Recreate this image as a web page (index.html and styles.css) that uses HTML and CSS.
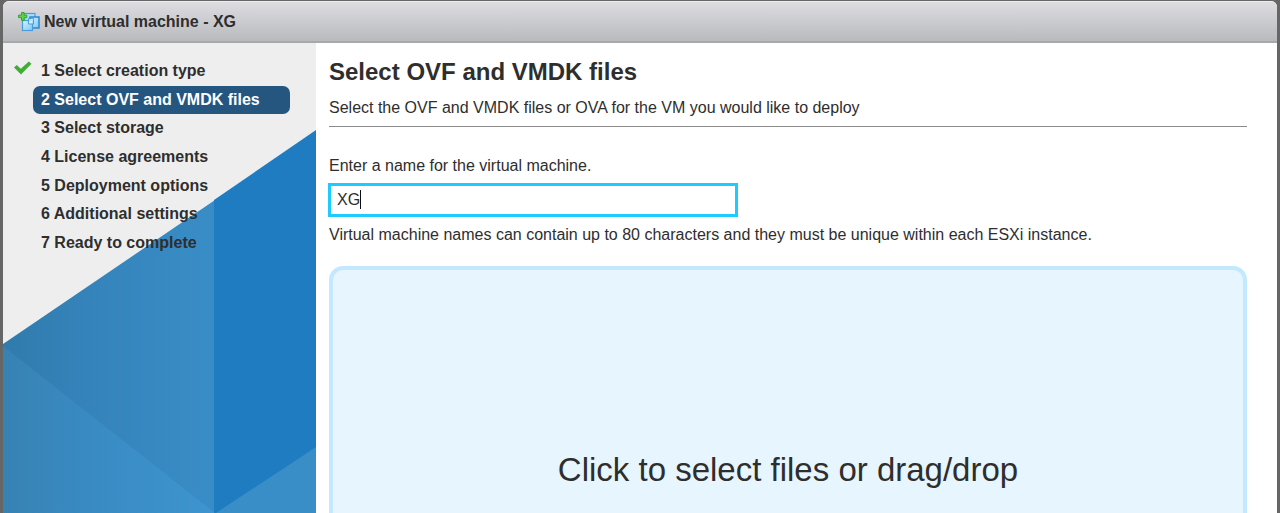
FILE: index.html
```html
<!DOCTYPE html>
<html lang="en">
<head>
  <meta charset="UTF-8" />
  <meta name="viewport" content="width=device-width, initial-scale=1.0"/>
  <title>New virtual machine - XG</title>
  <link rel="stylesheet" href="styles.css">
</head>
<body>
  <div class="dialog">
    <header class="titlebar">
      <svg class="vm-icon" viewBox="0 0 22 20" aria-hidden="true">
        <defs>
          <linearGradient id="pane" x1="0" y1="0" x2="1" y2="1">
            <stop offset="0" stop-color="#d8f3ff"/>
            <stop offset="1" stop-color="#7cc8f5"/>
          </linearGradient>
        </defs>
        <rect x="6" y="1.500" width="11" height="11" fill="#a9def8" stroke="#4a9ddb" stroke-width="1.2"/>
        <rect x="12" y="5" width="9" height="11" fill="url(#pane)" stroke="#2f86d0" stroke-width="1.5"/>
        <rect x="4.500" y="8.500" width="10" height="10" fill="url(#pane)" stroke="#4a9ddb" stroke-width="1.2"/>
        <path d="M10.500 6.500h5v5.500h-5z" fill="#e2f6ff" fill-opacity=".7" stroke="#4a9ddb"/>
        <path d="M3.500 .5h2.600v2.600h2.700v2.600H6.100v2.700H3.500V5.700H.6V3.100h2.900z" fill="#5fd04a" stroke="#34a52c"/>
      </svg>
      <span>New virtual machine - XG</span>
    </header>

    <div class="content">
      <nav class="sidebar">
        <svg class="backdrop" viewBox="0 0 313 470" preserveAspectRatio="none" aria-hidden="true">
          <defs>
            <linearGradient id="upper" x1="0" y1="0" x2="1" y2="0">
              <stop offset="0" stop-color="#307bac"/>
              <stop offset=".4" stop-color="#3583bb"/>
              <stop offset="1" stop-color="#398dc6"/>
            </linearGradient>
            <linearGradient id="lower" x1="0" y1="0" x2="1" y2="0">
              <stop offset="0" stop-color="#3782b3"/>
              <stop offset=".4" stop-color="#398ac3"/>
              <stop offset="1" stop-color="#3e95cf"/>
            </linearGradient>
          </defs>
          <path d="M0 301L212 157V470H0z" fill="url(#upper)"/>
          <path d="M0 303L212 470H0z" fill="url(#lower)"/>
          <path d="M211 157L313 87V470H211z" fill="#1f7cc1"/>
          <path d="M213 470L313 404V470z" fill="#398ec8"/>
        </svg>
        <ol class="steps">
          <li class="done">
            <svg class="check" viewBox="0 0 18 14" aria-hidden="true">
              <path d="M0 6.500L2.800 4L6.800 7.800L14.800 .5L17.500 2.800L7 13.500z" fill="#3fae35"/>
            </svg>
            <a href="#">1 Select creation type</a>
          </li>
          <li class="active"><a href="#" aria-current="step">2 Select OVF and VMDK files</a></li>
          <li><a href="#">3 Select storage</a></li>
          <li><a href="#">4 License agreements</a></li>
          <li><a href="#">5 Deployment options</a></li>
          <li><a href="#">6 Additional settings</a></li>
          <li><a href="#">7 Ready to complete</a></li>
        </ol>
      </nav>

      <main class="page">
        <h1>Select OVF and VMDK files</h1>
        <p class="subtitle">Select the OVF and VMDK files or OVA for the VM you would like to deploy</p>

        <label for="vmName">Enter a name for the virtual machine.</label>
        <div class="field">
          <input type="text" id="vmName" class="name-input" value="XG" />
          <span class="caret"></span>
        </div>
        <p class="hint">Virtual machine names can contain up to 80 characters and they must be unique within each ESXi instance.</p>

        <button type="button" class="dropzone">Click to select files or drag/drop</button>
      </main>
    </div>
  </div>
</body>
</html>
```

FILE: styles.css
```css
* {
  box-sizing: border-box;
}

body {
  margin: 0;
  padding: 1px 3px 0;
  height: 100vh;
  overflow: hidden;
  background-color: #666;
  color: #2e2e2e;
  font-family: "Liberation Sans", Arial, sans-serif;
  font-size: 16px;
  line-height: 20px;
}

.dialog {
  display: flex;
  flex-direction: column;
  height: 100%;
  overflow: hidden;
  border-radius: 6px 6px 0 0;
  background-color: #fff;
}

.titlebar {
  display: flex;
  align-items: center;
  gap: 4px;
  flex: none;
  height: 42px;
  padding-left: 15px;
  border-top: 1px solid #ececee;
  border-bottom: 2px solid #a9a9ab;
  background: linear-gradient(#dddde1, #b9babe);
  font-weight: bold;
}

.vm-icon {
  width: 22px;
  height: 20px;
}

.content {
  display: flex;
  flex: 1;
  min-height: 0;
}

.sidebar {
  position: relative;
  flex: none;
  width: 313px;
  background-color: #eee;
}

.backdrop {
  position: absolute;
  top: 0;
  left: 0;
  width: 100%;
  height: 100%;
}

.steps {
  position: relative;
  display: flex;
  flex-direction: column;
  justify-content: space-between;
  height: 214px;
  margin: 0;
  padding: 14px 26px 0 30px;
  list-style: none;
  font-weight: bold;
  line-height: 28px;
}

.steps li {
  padding-left: 8px;
}

.steps a {
  color: inherit;
  text-decoration: none;
}

.steps .done {
  position: relative;
}

.steps .active {
  border-radius: 7px;
  background-color: #25567f;
  color: #fff;
}

.check {
  position: absolute;
  top: 4px;
  left: -19px;
  width: 18px;
  height: 14px;
}

.page {
  flex: 1;
  min-width: 0;
  padding: 14px 30px 0 13px;
}

h1 {
  margin: 0 0 11px;
  font-size: 24px;
  line-height: 30px;
}

p {
  margin: 0;
}

.subtitle {
  margin-bottom: 29px;
  padding-bottom: 8px;
  border-bottom: 1px solid #8c8c8c;
}

label {
  display: block;
  margin-bottom: 7px;
}

.field {
  position: relative;
  width: 410px;
  margin-left: -1px;
}

.name-input {
  display: block;
  width: 100%;
  height: 34px;
  padding: 0 6px;
  border: 3px solid #1ecbff;
  outline: none;
  background-color: #fff;
  color: inherit;
  font: inherit;
}

.caret {
  position: absolute;
  top: 7px;
  left: 32px;
  width: 1px;
  height: 19px;
  background-color: #111;
}

.hint {
  margin: 8px 0 21px;
}

.dropzone {
  display: block;
  width: 100%;
  height: 408px;
  padding: 0;
  border: 4px solid #c2e9ff;
  border-radius: 14px;
  background-color: #e7f5fe;
  color: inherit;
  font-family: inherit;
  font-size: 33px;
  cursor: pointer;
}
```
